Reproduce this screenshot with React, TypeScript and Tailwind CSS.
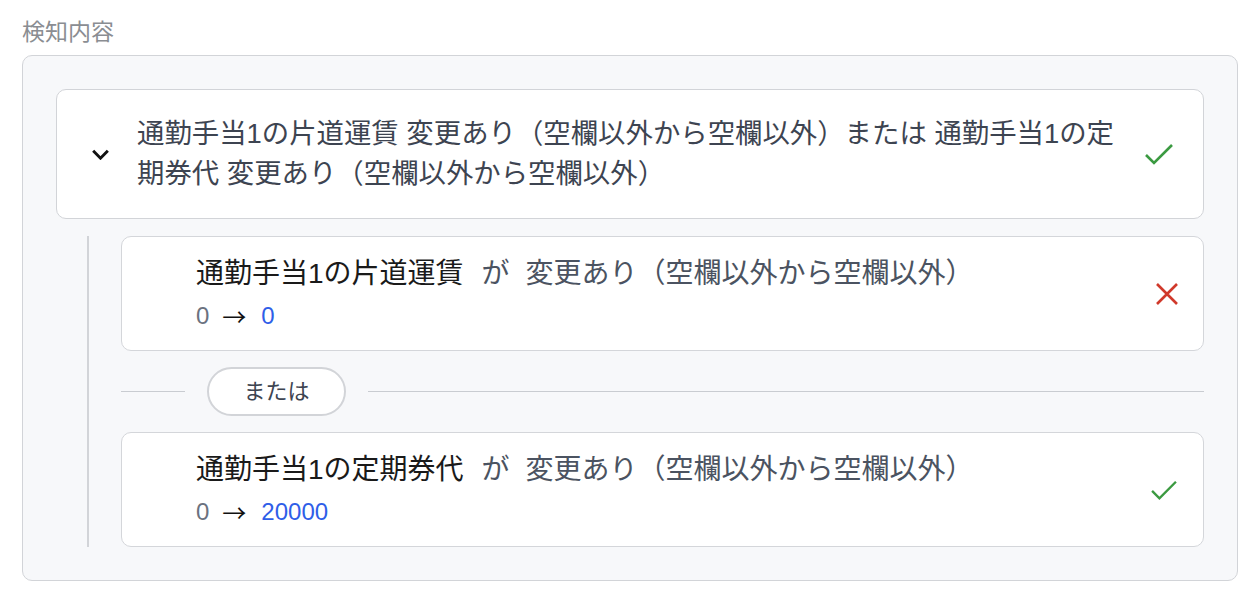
const font = { fontFamily: '"Liberation Sans", "Noto Sans CJK JP", sans-serif' };
const cjk = { fontFamily: '"Noto Sans CJK JP", sans-serif' };

function Check({ className }: { className?: string }) {
  return (
    <svg viewBox="0 0 30 24" className={className} fill="none">
      <path d="M2 13 L10 21 L28 3" stroke="#3b9a41" strokeWidth="2.6" strokeLinecap="butt" strokeLinejoin="miter" />
    </svg>
  );
}

function Cross() {
  return (
    <svg viewBox="0 0 22 22" className="w-[22px] h-[22px]" fill="none">
      <path d="M1 1 L21 21 M21 1 L1 21" stroke="#d0392b" strokeWidth="2.6" />
    </svg>
  );
}

function Condition({ field, from, to, ok }: { field: string; from: string; to: string; ok: boolean }) {
  return (
    <div className="flex items-center h-[115px] bg-white border border-[#d4d6da] rounded-[10px] pl-[74px] pr-[25px]">
      <div className="flex-1">
        <div className="text-[28px] leading-[36px] text-[#1a1a1a]">
          {field}
          <span className="text-[#4b5361] ml-[18px]">が</span>
          <span className="text-[#4b5361] ml-[16px]">変更あり（空欄以外から空欄以外）</span>
        </div>
        <div className="mt-[9px] text-[24px] leading-[30px] flex items-center">
          <span className="text-[#6b7280]">{from}</span>
          <span className="text-[#111] ml-[13px] mr-[15px]" style={cjk}>→</span>
          <span className="text-[#2f5ee8]">{to}</span>
        </div>
      </div>
      {ok ? <Check className="w-[28px] h-[22px]" /> : <Cross />}
    </div>
  );
}

export default function App() {
  return (
    <div className="w-[1260px] h-[606px] bg-white px-[22px] pt-[16px]" style={font}>
      <div className="text-[23px] leading-[32px] text-[#8a8d92] mb-[7px]">検知内容</div>
      <div className="bg-[#f7f8fa] border border-[#d2d4d8] rounded-[10px] p-[33px] pb-[33px]">
        <div className="flex items-center h-[130px] bg-white border border-[#d2d4d8] rounded-[10px] pl-[34px] pr-[29px]">
          <svg viewBox="0 0 20 12" className="w-[19px] h-[11px] mr-[27px] shrink-0" fill="none">
            <path d="M2 2 L10 10 L18 2" stroke="#111" strokeWidth="3.2" />
          </svg>
          <div className="flex-1 text-[27.4px] leading-[40px] text-[#3d4451] pr-[20px]">
            通勤手当1の片道運賃 変更あり（空欄以外から空欄以外）または 通勤手当1の定期券代 変更あり（空欄以外から空欄以外）
          </div>
          <Check className="w-[30px] h-[24px]" />
        </div>
        <div className="mt-[17px] ml-[31px] border-l-2 border-[#d2d4d8] pl-[32px]">
          <Condition field="通勤手当1の片道運賃" from="0" to="0" ok={false} />
          <div className="flex items-center py-[16px]">
            <div className="w-[64px] h-px bg-[#c9ccd1]" />
            <div className="mx-[22px] w-[139px] h-[49px] rounded-full border-2 border-[#d2d4d8] bg-white flex items-center justify-center text-[22px] text-[#3d4451]">
              または
            </div>
            <div className="flex-1 h-px bg-[#c9ccd1]" />
          </div>
          <Condition field="通勤手当1の定期券代" from="0" to="20000" ok={true} />
        </div>
      </div>
    </div>
  );
}
